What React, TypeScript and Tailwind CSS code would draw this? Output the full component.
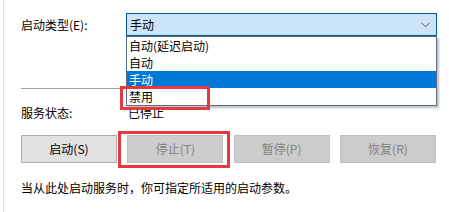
import React from 'react';

const font = { fontFamily: '"Noto Sans CJK SC", "Noto Sans", sans-serif' };

const options = ['自动(延迟启动)', '自动', '手动', '禁用'];

function ServiceButton({ label, enabled }: { label: string; enabled?: boolean }) {
  return (
    <div
      className={
        enabled
          ? 'w-[96px] h-[28px] flex items-center justify-center border border-[#adadad] bg-[#e1e1e1] text-[12px] text-black'
          : 'w-[96px] h-[28px] flex items-center justify-center border border-[#bfbfbf] bg-[#cccccc] text-[12px] text-[#838383]'
      }
    >
      {label}
    </div>
  );
}

export default function App() {
  return (
    <div className="w-[449px] h-[212px] bg-white overflow-hidden" style={font}>
      <div className="relative ml-[3px] h-full border-l border-[#e3e3e3] pl-[17px] pt-[13px]">
        {/* startup type */}
        <div className="flex items-center h-[23px]">
          <div className="w-[105px] text-[12px] text-black leading-none">启动类型(E):</div>
          <div className="w-[311px] h-[23px] flex items-center justify-between border border-[#0a5596] bg-[#cce4f7] pl-[3px] pr-[6px] text-[12px] text-black">
            <span>手动</span>
            <svg width="9" height="6" viewBox="0 0 9 6" fill="none">
              <path d="M0.5 0.8 L4.5 4.8 L8.5 0.8" stroke="#555" strokeWidth="1" />
            </svg>
          </div>
        </div>

        <div className="mt-[52px] h-px w-[416px] bg-[#a0a0a0]" />

        {/* status */}
        <div className="mt-[16px] h-[16px] flex items-center text-[12px] text-black">
          <div className="w-[107px]">服务状态:</div>
          <div>已停止</div>
        </div>

        {/* buttons */}
        <div className="mt-[14px] w-[415px] flex justify-between">
          <ServiceButton label="启动(S)" enabled />
          <ServiceButton label="停止(T)" />
          <ServiceButton label="暂停(P)" />
          <ServiceButton label="恢复(R)" />
        </div>

        <div className="mt-[17px] h-[16px] flex items-center text-[12px] text-black">
          当从此处启动服务时，你可指定所适用的启动参数。
        </div>

        {/* open dropdown list */}
        <div className="absolute left-[122px] top-[36px] w-[311px] border border-[#5a6f86] bg-white shadow-[2px_2px_2px_rgba(0,0,0,0.25)]">
          {options.map((opt) => (
            <div
              key={opt}
              className={
                opt === '手动'
                  ? 'h-[17px] flex items-center pl-[2px] text-[12px] bg-[#0078d7] text-white'
                  : 'h-[17px] flex items-center pl-[2px] text-[12px] text-black'
              }
            >
              {opt}
            </div>
          ))}
        </div>

        {/* highlight boxes */}
        <div className="absolute left-[116px] top-[86px] w-[90px] h-[24px] border-[3px] border-[#e4393f]" />
        <div className="absolute left-[114px] top-[131px] w-[112px] h-[37px] border-[3px] border-[#e4393f]" />
      </div>
    </div>
  );
}
